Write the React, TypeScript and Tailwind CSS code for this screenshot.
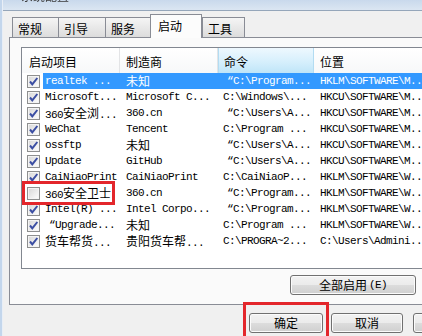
import React from 'react';

type Row = { on: boolean; sel?: boolean; name: string; mfr: string; cmd: string; loc: string };

const rows: Row[] = [
  { on: true, sel: true, name: 'realtek ...', mfr: '未知', cmd: '“C:\\Program...', loc: 'HKLM\\SOFTWARE\\M...' },
  { on: true, name: 'Microsoft...', mfr: 'Microsoft C...', cmd: 'C:\\Windows\\...', loc: 'HKCU\\SOFTWARE\\M...' },
  { on: true, name: '360安全浏...', mfr: '360.cn', cmd: '“C:\\Users\\A...', loc: 'HKCU\\SOFTWARE\\M...' },
  { on: true, name: 'WeChat', mfr: 'Tencent', cmd: 'C:\\Program ...', loc: 'HKCU\\SOFTWARE\\M...' },
  { on: true, name: 'ossftp', mfr: '未知', cmd: '“C:\\Users\\A...', loc: 'HKCU\\SOFTWARE\\M...' },
  { on: true, name: 'Update', mfr: 'GitHub', cmd: '“C:\\Users\\A...', loc: 'HKCU\\SOFTWARE\\M...' },
  { on: true, name: 'CaiNiaoPrint', mfr: 'CaiNiaoPrint', cmd: 'C:\\CaiNiaoP...', loc: 'HKLM\\SOFTWARE\\W...' },
  { on: false, name: '360安全卫士', mfr: '360.cn', cmd: '“C:\\Program...', loc: 'HKLM\\SOFTWARE\\W...' },
  { on: true, name: 'Intel(R) ...', mfr: 'Intel Corpo...', cmd: '“C:\\Program...', loc: 'HKLM\\SOFTWARE\\W...' },
  { on: true, name: '“Upgrade...', mfr: '未知', cmd: 'C:\\Program ...', loc: 'HKLM\\SOFTWARE\\W...' },
  { on: true, name: '货车帮货...', mfr: '贵阳货车帮...', cmd: 'C:\\PROGRA~2...', loc: 'C:\\Users\\Admini...' },
];

const tabs = ['常规', '引导', '服务', '启动', '工具'];
const tabWidths = ['w-[47px]', 'w-[48px]', 'w-[46px]', 'w-[52px]', 'w-[43px]'];

// ASCII in a narrow mono face, CJK runs in a 12px sans face (like SimSun mixed text)
const Mixed = ({ s }: { s: string }) => {
  const parts = s.split(/([\u4e00-\u9fff]+|“)/).filter(Boolean);
  return (
    <>
      {parts.map((p, i) =>
        p === '“' ? (
          <span key={i} className="inline-block w-[10px] text-right">“</span>
        ) : /[\u4e00-\u9fff]/.test(p) ? (
          <span key={i} className="font-['Noto_Sans_CJK_SC',sans-serif] text-[12px] tracking-normal">{p}</span>
        ) : (
          <span key={i}>{p}</span>
        )
      )}
    </>
  );
};

const Check = ({ on }: { on: boolean }) => (
  <span className="w-[13px] h-[13px] border border-[#8e8f8f] bg-[linear-gradient(135deg,#d6d6d6,#ffffff)] shadow-[inset_0_0_0_1px_#f4f4f4] flex items-center justify-center shrink-0">
    {on && (
      <svg width="11" height="11" viewBox="0 0 11 11">
        <path d="M2 5.5 L4.3 8.3 L9.3 2" fill="none" stroke="#3b4ea3" strokeWidth="2" />
      </svg>
    )}
  </span>
);

const btn =
  "h-[20px] border border-[#707070] rounded-[3px] bg-[linear-gradient(#f2f2f2_0%,#ebebeb_50%,#dddddd_50%,#cfcfcf_100%)] shadow-[inset_0_0_0_1px_#fbfbfb] flex items-center justify-center text-[12px] text-black font-['Noto_Sans_CJK_SC',sans-serif]";

export default function App() {
  return (
    <div className="relative w-[422px] h-[336px] overflow-hidden flex bg-[#f0f0f0] font-['Noto_Sans_CJK_SC',sans-serif]">
      {/* window frame, left */}
      <div className="w-[3px] shrink-0 bg-[#c3d6ec] border-r border-[#e8eef6]" />

      <div className="flex-1 min-w-0 flex flex-col">
        {/* window frame, top with cut title */}
        <div className="h-[11px] shrink-0 bg-[linear-gradient(#c9d9ec,#dbe6f2)] border-b border-[#95a6ba] overflow-hidden">
          <div className="-mt-[10px] ml-[18px] text-[12px] leading-[12px] text-[#3a3a3a] blur-[0.4px]">系统配置</div>
        </div>

        {/* tabs */}
        <div className="flex items-end h-[26px] pl-[9px] shrink-0">
          {tabs.map((t, i) =>
            i === 3 ? (
              <div
                key={t}
                className={`${tabWidths[i]} h-[24px] -mb-px relative z-10 border border-b-0 border-[#898c95] bg-[#fcfcfc] pl-[7px] pt-[4px] text-[12px] leading-[14px] text-black`}
              >
                {t}
              </div>
            ) : (
              <div
                key={t}
                className={`${tabWidths[i]} h-[20px] border border-b-0 border-[#898c95] bg-[linear-gradient(#f5f5f5,#dcdcdc)] pl-[5px] pt-[4px] text-[12px] leading-[14px] text-black ${i === 4 ? '' : '-mr-px'}`}
              >
                {t}
              </div>
            )
          )}
        </div>

        {/* tab panel */}
        <div className="ml-[6px] w-[440px] h-[268px] shrink-0 border border-[#898c95] bg-[#fafafa] pl-[11px] pt-[9px]">
          <div className="w-[420px] h-[222px] border border-[#828790] bg-white">
            {/* header */}
            <div className="flex h-[25px] text-[12px] text-black bg-[linear-gradient(#ffffff,#f7f8f9)]">
              <div className="w-[98px] pl-[7px] pt-[5px] border-r border-[#e3e4e6]">启动项目</div>
              <div className="w-[98px] pl-[6px] pt-[5px] border-r border-[#e3e4e6]">制造商</div>
              <div className="w-[96px] pl-[5px] pt-[5px] border-x border-[#b3dcf2] bg-[linear-gradient(#eef8fe,#d6effc_55%,#bfe5f8)]">命令</div>
              <div className="flex-1 pl-[6px] pt-[5px]">位置</div>
            </div>

            {/* rows */}
            <div className="font-['Liberation_Mono','Noto_Sans_CJK_SC',monospace] text-[11px] tracking-[-0.6px]">
              {rows.map((r, i) => (
                <div key={i} className="flex h-[16px] items-center">
                  <div className="w-[21px] shrink-0 pl-[5px] flex items-center">
                    <Check on={r.on} />
                  </div>
                  <div
                    className={`flex-1 flex h-[16px] leading-[16px] whitespace-nowrap ${
                      r.sel ? 'bg-[#3399ff] text-white' : 'text-black'
                    }`}
                  >
                    <div className="w-[77px] pl-[2px] overflow-hidden"><Mixed s={r.name} /></div>
                    <div className="w-[98px] pl-[6px] overflow-hidden"><Mixed s={r.mfr} /></div>
                    <div className="w-[96px] pl-[5px] overflow-hidden"><Mixed s={r.cmd} /></div>
                    <div className="flex-1 pl-[6px] overflow-hidden"><Mixed s={r.loc} /></div>
                  </div>
                </div>
              ))}
            </div>
          </div>

          <div className={`${btn} w-[126px] ml-[269px] mt-[6px]`}>
            全部启用<span className="font-['Liberation_Mono',monospace] text-[11px] tracking-[-0.6px] ml-[2px]">(E)</span>
          </div>
        </div>

        {/* dialog buttons */}
        <div className="flex gap-[8px] pl-[246px] mt-[8px] shrink-0">
          <div className={`${btn} w-[74px] shrink-0 border-[#3c7fb1] shadow-[inset_0_0_0_1px_#a9dcf6]`}>确定</div>
          <div className={`${btn} w-[72px] shrink-0`}>取消</div>
          <div className={`${btn} w-[72px] shrink-0 ml-[2px]`}>应用</div>
        </div>
      </div>

      {/* red highlight marks drawn over the dialog */}
      <div className="absolute left-[22px] top-[181px] w-[93px] h-[24px] border-[3px] border-[#e3262b]" />
      <div className="absolute left-[243px] top-[302px] w-[86px] h-[40px] border-[3px] border-[#e3262b]" />
    </div>
  );
}
